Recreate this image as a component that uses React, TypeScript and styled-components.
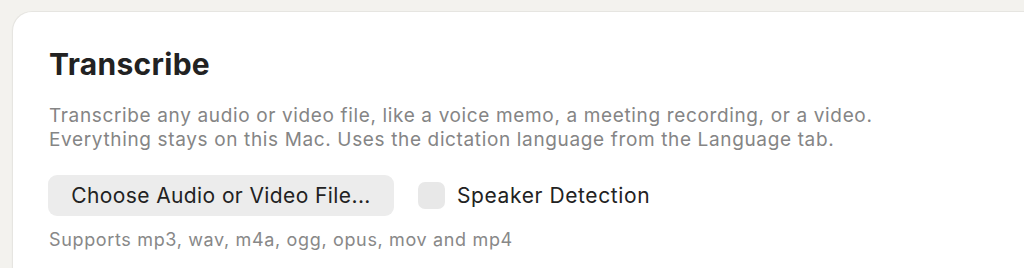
import React from 'react';
import styled, { createGlobalStyle } from 'styled-components';

const GlobalStyle = createGlobalStyle`
  html, body {
    margin: 0;
    padding: 0;
    background: #f3f2ee;
    font-family: Inter, "Noto Sans", sans-serif;
    -webkit-font-smoothing: antialiased;
  }
`

const Page = styled.div`
  height: 268px;
  overflow: hidden;
  padding: 11px 0 0 12px;
  box-sizing: border-box;
`

const Card = styled.section`
  background: #ffffff;
  border: 1px solid #e6e5e1;
  border-right: none;
  border-radius: 20px 0 0 0;
  height: 300px;
  padding: 35px 0 0 35px;
  box-sizing: border-box;
  box-shadow: 0 1px 2px rgba(0, 0, 0, 0.04);
`

const Title = styled.h2`
  margin: 0 0 0 1px;
  font-size: 30px;
  font-weight: 700;
  color: #222222;
  letter-spacing: 0.3px;
  line-height: 34px;
`

const Description = styled.p`
  margin: 23px 0 0 1px;
  font-size: 19px;
  line-height: 24px;
  letter-spacing: 0.64px;
  color: #858585;
`

const Controls = styled.div`
  display: flex;
  align-items: center;
  gap: 24px;
  margin-top: 23px;
`

const FileButton = styled.button`
  height: 41px;
  width: 346px;
  border: none;
  border-radius: 9px;
  background: #ececec;
  color: #222222;
  font-family: inherit;
  font-size: 21px;
  letter-spacing: 0.4px;
  padding: 0;
  cursor: pointer;
`

const CheckLabel = styled.label`
  display: flex;
  align-items: center;
  gap: 12px;
  font-size: 21px;
  letter-spacing: 0.6px;
  color: #222222;
`

const Box = styled.span`
  width: 27px;
  height: 27px;
  border-radius: 7px;
  background: #e8e8e8;
`

const Hint = styled.p`
  margin: 13px 0 0 1px;
  font-size: 18px;
  line-height: 22px;
  letter-spacing: 0.65px;
  color: #888888;
`

export default function App() {
  return (
    <>
      <GlobalStyle />
      <Page>
        <Card>
          <Title>Transcribe</Title>
          <Description>
            Transcribe any audio or video file, like a voice memo, a meeting recording, or a video.
            <br />
            Everything stays on this Mac. Uses the dictation language from the Language tab.
          </Description>
          <Controls>
            <FileButton>Choose Audio or Video File...</FileButton>
            <CheckLabel>
              <Box />
              Speaker Detection
            </CheckLabel>
          </Controls>
          <Hint>Supports mp3, wav, m4a, ogg, opus, mov and mp4</Hint>
        </Card>
      </Page>
    </>
  );
}
